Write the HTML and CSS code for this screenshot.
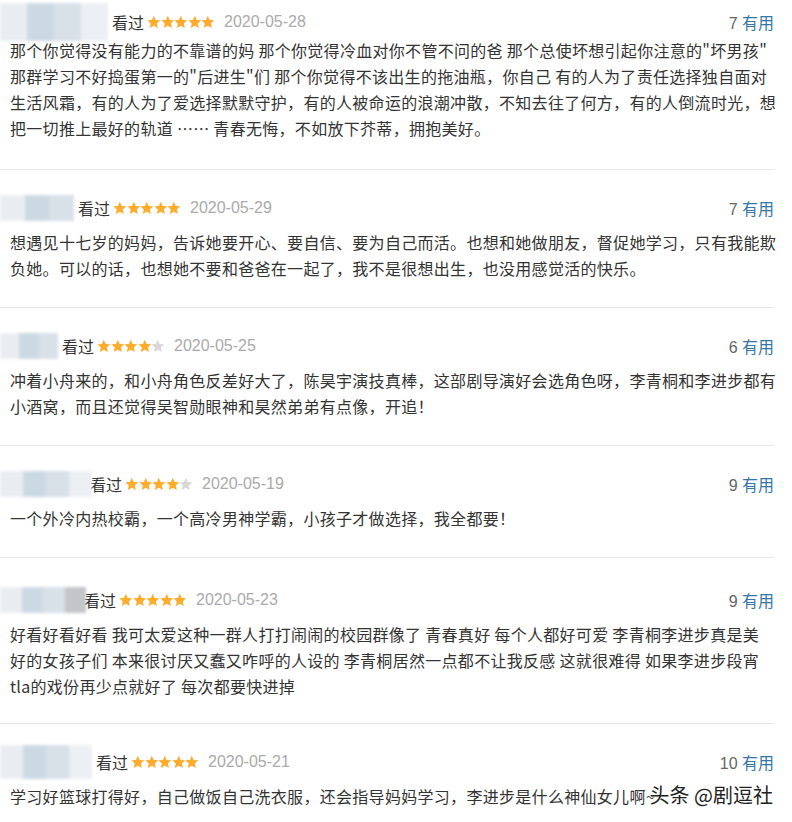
FILE: index.html
```html
<!DOCTYPE html>
<html lang="zh-CN">
<head>
    <meta charset="UTF-8">
    <meta name="viewport" content="width=device-width, initial-scale=1.0">
    <title>短评</title>
    <link rel="stylesheet" href="styles.css">
</head>
<body>
    <svg width="0" height="0" class="defs">
        <symbol id="star" viewBox="0 0 24 24">
            <path d="M12 0.8L15.29 8.27 23.41 9.09 17.33 14.53 19.05 22.51 12 18.4 4.95 22.51 6.67 14.53 0.59 9.09 8.71 8.27z"/>
        </symbol>
    </svg>

    <div class="comments">
        <div class="comment first">
            <div class="meta">
                <div class="mask m1"><span></span><span></span><span></span><span></span></div>
                <span class="watched">看过</span>
                <span class="stars"><svg class="on"><use href="#star"/></svg><svg class="on"><use href="#star"/></svg><svg class="on"><use href="#star"/></svg><svg class="on"><use href="#star"/></svg><svg class="on"><use href="#star"/></svg></span>
                <span class="date">2020-05-28</span>
                <span class="votes">7 <a>有用</a></span>
            </div>
            <p class="text">那个你觉得没有能力的不靠谱的妈 那个你觉得冷血对你不管不问的爸 那个总使坏想引起你注意的"坏男孩"<br>那群学习不好捣蛋第一的"后进生"们 那个你觉得不该出生的拖油瓶，你自己 有的人为了责任选择独自面对<br>生活风霜，有的人为了爱选择默默守护，有的人被命运的浪潮冲散，不知去往了何方，有的人倒流时光，想<br>把一切推上最好的轨道 …… 青春无悔，不如放下芥蒂，拥抱美好。</p>
        </div>

        <div class="comment">
            <div class="meta">
                <div class="mask m2"><span></span><span></span><span></span></div>
                <span class="watched">看过</span>
                <span class="stars"><svg class="on"><use href="#star"/></svg><svg class="on"><use href="#star"/></svg><svg class="on"><use href="#star"/></svg><svg class="on"><use href="#star"/></svg><svg class="on"><use href="#star"/></svg></span>
                <span class="date">2020-05-29</span>
                <span class="votes">7 <a>有用</a></span>
            </div>
            <p class="text">想遇见十七岁的妈妈，告诉她要开心、要自信、要为自己而活。也想和她做朋友，督促她学习，只有我能欺<br>负她。可以的话，也想她不要和爸爸在一起了，我不是很想出生，也没用感觉活的快乐。</p>
        </div>

        <div class="comment">
            <div class="meta">
                <div class="mask m3"><span></span><span></span><span></span></div>
                <span class="watched">看过</span>
                <span class="stars"><svg class="on"><use href="#star"/></svg><svg class="on"><use href="#star"/></svg><svg class="on"><use href="#star"/></svg><svg class="on"><use href="#star"/></svg><svg class="off"><use href="#star"/></svg></span>
                <span class="date">2020-05-25</span>
                <span class="votes">6 <a>有用</a></span>
            </div>
            <p class="text">冲着小舟来的，和小舟角色反差好大了，陈昊宇演技真棒，这部剧导演好会选角色呀，李青桐和李进步都有<br>小酒窝，而且还觉得吴智勋眼神和昊然弟弟有点像，开追！</p>
        </div>

        <div class="comment">
            <div class="meta">
                <div class="mask m4"><span></span><span></span><span></span><span></span></div>
                <span class="watched">看过</span>
                <span class="stars"><svg class="on"><use href="#star"/></svg><svg class="on"><use href="#star"/></svg><svg class="on"><use href="#star"/></svg><svg class="on"><use href="#star"/></svg><svg class="off"><use href="#star"/></svg></span>
                <span class="date">2020-05-19</span>
                <span class="votes">9 <a>有用</a></span>
            </div>
            <p class="text">一个外冷内热校霸，一个高冷男神学霸，小孩子才做选择，我全都要！</p>
        </div>

        <div class="comment fifth">
            <div class="meta">
                <div class="mask m5"><span></span><span></span><span></span><span></span></div>
                <span class="watched">看过</span>
                <span class="stars"><svg class="on"><use href="#star"/></svg><svg class="on"><use href="#star"/></svg><svg class="on"><use href="#star"/></svg><svg class="on"><use href="#star"/></svg><svg class="on"><use href="#star"/></svg></span>
                <span class="date">2020-05-23</span>
                <span class="votes">9 <a>有用</a></span>
            </div>
            <p class="text">好看好看好看 我可太爱这种一群人打打闹闹的校园群像了 青春真好 每个人都好可爱 李青桐李进步真是美<br>好的女孩子们 本来很讨厌又蠢又咋呼的人设的 李青桐居然一点都不让我反感 这就很难得 如果李进步段宵<br>tla的戏份再少点就好了 每次都要快进掉</p>
        </div>

        <div class="comment last">
            <div class="meta">
                <div class="mask m6"><span></span><span></span><span></span><span></span></div>
                <span class="watched">看过</span>
                <span class="stars"><svg class="on"><use href="#star"/></svg><svg class="on"><use href="#star"/></svg><svg class="on"><use href="#star"/></svg><svg class="on"><use href="#star"/></svg><svg class="on"><use href="#star"/></svg></span>
                <span class="date">2020-05-21</span>
                <span class="votes">10 <a>有用</a></span>
            </div>
            <p class="text">学习好篮球打得好，自己做饭自己洗衣服，还会指导妈妈学习，李进步是什么神仙女儿啊~</p>
        </div>
    </div>

    <div class="watermark">头条 @剧逗社</div>
</body>
</html>
```

FILE: styles.css
```css
body {
    margin: 0;
    background: #fff;
    font-family: 'Liberation Sans', 'Noto Sans CJK SC', sans-serif;
    color: #333;
    overflow: hidden;
    height: 822px;
    position: relative;
}

.defs {
    position: absolute;
}

.comments {
    width: 774px;
}

.comment {
    padding: 25px 0 26px;
    border-bottom: 1px solid #e6e6e6;
}

.comment.first {
    padding-top: 9px;
    padding-bottom: 28px;
}

.comment.first .text {
    margin-top: 2px;
}

.comment.fifth {
    padding-top: 29px;
    padding-bottom: 24px;
}

.comment.last {
    border-bottom: none;
}

.meta {
    display: flex;
    align-items: center;
    height: 26px;
    font-size: 16px;
}

.mask {
    display: flex;
    height: 26px;
    filter: blur(1.5px);
    opacity: 0.85;
}

.mask span {
    flex: 1;
    height: 100%;
}

.mask span:nth-child(1) { background: #e6ebf0; }
.mask span:nth-child(2) { background: #c4d3df; }
.mask span:nth-child(3) { background: #d2dbe4; }
.mask span:nth-child(4) { background: #e9edf1; }

.m1 { width: 108px; height: 38px; border-radius: 0 19px 19px 0; }
.m2 { width: 74px; }
.m3 { width: 58px; border-radius: 0 12px 12px 0; }
.m4 { width: 92px; margin-right: -6px; }
.m5 { width: 86px; margin-right: -6px; }
.m5 span:nth-child(4) { background: #b9bcbf; }
.m6 { width: 92px; height: 34px; border-radius: 0 16px 16px 0; }

.watched {
    margin-left: 4px;
    color: #333;
}

.stars {
    display: flex;
    margin-left: 3px;
}

.stars svg {
    width: 13.6px;
    height: 14px;
}

.stars .on {
    fill: #ffac2d;
}

.stars .off {
    fill: #d9d9d9;
}

.date {
    margin-left: 9px;
    color: #aaa;
}

.votes {
    margin-left: auto;
    color: #666;
}

.votes a {
    color: #37a;
}

.text {
    margin: 8px 0 0;
    padding-left: 10px;
    width: 770px;
    font-family: 'Noto Sans CJK SC', 'Liberation Sans', sans-serif;
    font-size: 16px;
    line-height: 26px;
    letter-spacing: 0.3px;
    color: #333;
    white-space: nowrap;
}

.watermark {
    position: absolute;
    right: 19px;
    top: 780px;
    font-family: 'Noto Sans CJK SC', sans-serif;
    font-size: 20px;
    line-height: 30px;
    color: #222;
    text-shadow: 0 0 2px #fff, 0 0 2px #fff, 0 0 3px #fff;
}
```
